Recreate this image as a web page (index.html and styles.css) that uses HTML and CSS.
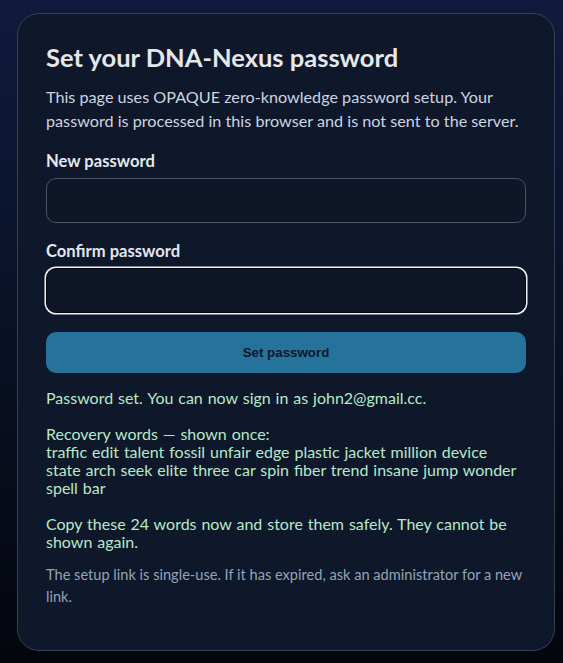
FILE: index.html
```html
<!DOCTYPE html>
<html lang="en">
<head>
<meta charset="utf-8">
<title>Set your DNA-Nexus password</title>
<link rel="stylesheet" href="styles.css">
</head>
<body>
<main class="card">
  <h1 class="title">Set your DNA-Nexus password</h1>
  <p class="intro">This page uses OPAQUE zero-knowledge password setup. Your password is processed in this browser and is not sent to the server.</p>
  <form class="form">
    <label class="field">
      <span class="label">New password</span>
      <input class="input" type="password" autocomplete="new-password">
    </label>
    <label class="field">
      <span class="label">Confirm password</span>
      <input class="input input-focused" type="password" autocomplete="new-password">
    </label>
    <button class="button" type="button">Set password</button>
  </form>
  <div class="status">Password set. You can now sign in as john2@gmail.cc.

Recovery words — shown once:
traffic edit talent fossil unfair edge plastic jacket million device
state arch seek elite three car spin fiber trend insane jump wonder
spell bar

Copy these 24 words now and store them safely. They cannot be shown again.</div>
  <p class="note">The setup link is single-use. If it has expired, ask an administrator for a new link.</p>
</main>
</body>
</html>
```
FILE: styles.css
```css
html {
  height: 100%;
}
body {
  margin: 0;
  min-height: 100%;
  box-sizing: border-box;
  padding: 13px 8px 12px 17px;
  background: linear-gradient(180deg, #0f1a3d 0%, #0a1228 45%, #04060d 100%);
  font-family: Lato, "Noto Sans", sans-serif;
  color: #cbd5e1;
}
.card {
  box-sizing: border-box;
  width: 538px;
  height: 638px;
  padding: 28px;
  background: #0f172a;
  border: 1px solid #334155;
  border-radius: 22px;
}
.title {
  margin: 0;
  font-size: 25.5px;
  line-height: 30px;
  font-weight: 700;
  color: #e5e7eb;
}
.intro {
  margin: 13px 0 0;
  font-size: 16.2px;
  line-height: 24px;
  color: #cbd5e1;
}
.form {
  margin-top: 18px;
  display: flex;
  flex-direction: column;
}
.field {
  display: flex;
  flex-direction: column;
  margin-bottom: 18px;
}
.label {
  font-size: 16.6px;
  line-height: 20px;
  font-weight: 700;
  color: #e2e8f0;
  margin-bottom: 7px;
}
.input {
  box-sizing: border-box;
  height: 45px;
  padding: 0 12px;
  background: #0e1628;
  border: 1px solid #475569;
  border-radius: 10px;
  color: #e2e8f0;
  font-size: 16px;
  outline: none;
}
.input-focused {
  border-color: #05070c;
  box-shadow: 0 0 0 1.5px #eef2f7;
}
.button {
  height: 41px;
  margin-top: 1px;
  border: none;
  border-radius: 10px;
  background: #38bdf8;
  opacity: 0.55;
  color: #0f172a;
  font-family: "Liberation Sans", Arial, sans-serif;
  font-size: 13.33px;
  font-weight: 700;
}
.status {
  margin-top: 16px;
  white-space: pre-wrap;
  font-size: 16px;
  line-height: 18px;
  word-spacing: 0.8px;
  color: #b6e9ca;
}
.note {
  margin: 13px 0 0;
  font-size: 14.6px;
  line-height: 22px;
  color: #94a3b8;
}
```
